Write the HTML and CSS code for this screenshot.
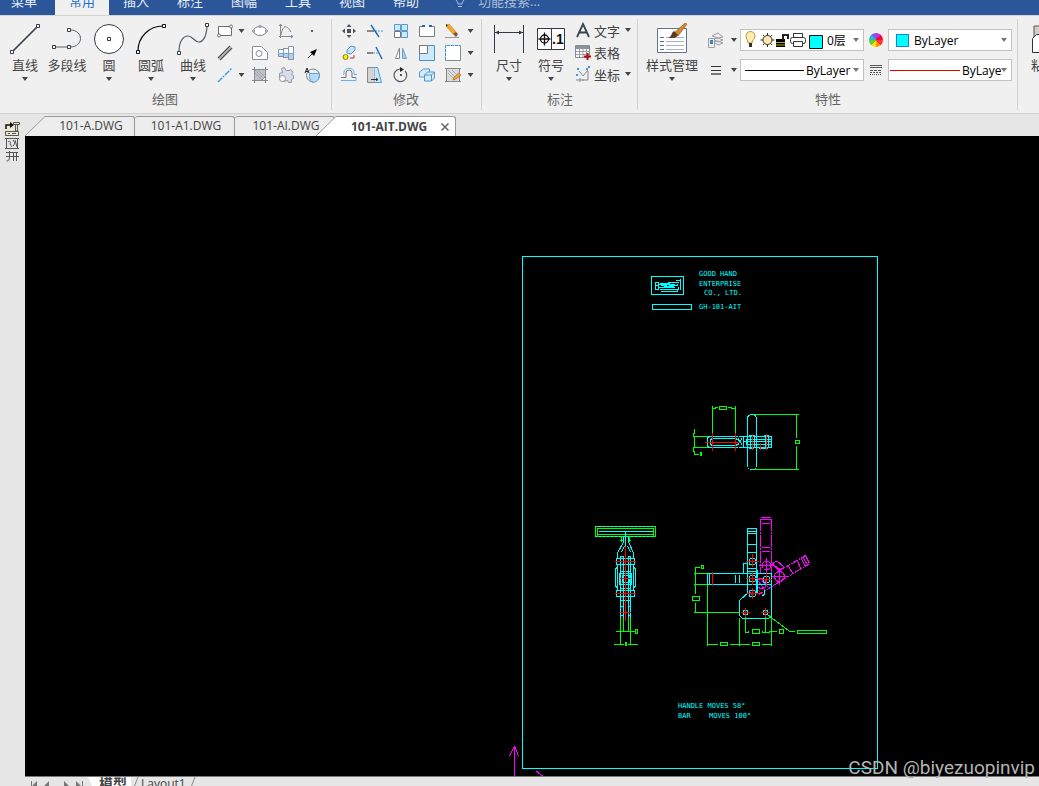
FILE: index.html
```html
<!DOCTYPE html>
<html lang="zh-CN">
<head>
    <meta charset="UTF-8">
    <meta name="viewport" content="width=device-width, initial-scale=1.0">
    <title>101-AIT.DWG</title>
    <link rel="stylesheet" href="styles.css">
</head>
<body>
    <nav class="menu">
        <a class="menu-file" href="#">菜单</a>
        <a class="active" href="#">常用</a>
        <a href="#">插入</a>
        <a href="#">标注</a>
        <a href="#">图幅</a>
        <a href="#">工具</a>
        <a href="#">视图</a>
        <a href="#">帮助</a>
        <label class="search">
            <svg width="12" height="16" viewBox="0 0 12 16" fill="none" stroke="#a9bddc"><path d="M4 11C4 8 1.500 8 1.500 5a4.500 4.500 0 0 1 9 0c0 3-2.500 3-2.500 6zM4 13.500h4"/></svg>
            <input type="text" placeholder="功能搜索..." aria-label="功能搜索">
        </label>
    </nav>

    <header class="ribbon">
        <section class="group group-draw">
            <div class="tools">
                <button class="big">
                    <svg width="32" height="32" viewBox="0 0 32 32" fill="#fff" stroke="#333a42"><path d="M3 29L28 4" stroke-width="1.600"/><path d="M1.500 27.500h3v3h-3zM27.500 1.500h3v3h-3z"/></svg>
                    <span>直线</span><i class="caret"></i>
                </button>
                <button class="big">
                    <svg width="32" height="32" viewBox="0 0 32 32" fill="none" stroke="#333a42"><path d="M3 24h16c14 0 14-17 0-17" stroke="#59616a"/><path d="M1.500 22.500h3v3h-3zM16.500 22.500h3v3h-3zM16.500 5.500h3v3h-3z" fill="#fff"/></svg>
                    <span>多段线</span>
                </button>
                <button class="big">
                    <svg width="32" height="32" viewBox="0 0 32 32" fill="#fff" stroke="#333a42"><circle cx="16" cy="16" r="14.500"/><path d="M14.500 14.500h3v3h-3z"/></svg>
                    <span>圆</span><i class="caret"></i>
                </button>
                <button class="big">
                    <svg width="32" height="32" viewBox="0 0 32 32" fill="none" stroke="#111"><path d="M3 28C3 14 14 3 28 3" stroke-width="1.200"/><path d="M1.500 27.500h3v3h-3zM27.500 1.500h3v3h-3z" fill="#fff"/></svg>
                    <span>圆弧</span><i class="caret"></i>
                </button>
                <button class="big">
                    <svg width="32" height="32" viewBox="0 0 32 32" fill="none" stroke="#333a42"><path d="M2 29C2 17 7 13 11 13c5 0 6 6 11 6 4 0 8-6 8-17" stroke="#59616a" stroke-width="1.200"/><path d="M.500 28.500h3v3h-3zM28.500 .500h3v3h-3z" fill="#fff"/></svg>
                    <span>曲线</span><i class="caret"></i>
                </button>
                <div class="grid grid-draw">
                    <button class="small" aria-label="矩形"><svg width="16" height="16" viewBox="0 0 16 16" fill="#fff" stroke="#666d75"><path d="M1.500 3.500h13v9h-13z"/><circle cx="14" cy="3.500" r="1.500"/><circle cx="2" cy="12.500" r="1.500"/></svg></button>
                    <i class="caret"></i>
                    <button class="small" aria-label="椭圆"><svg width="16" height="16" viewBox="0 0 16 16" fill="#fff" stroke="#777e86"><ellipse cx="8" cy="8" rx="6.500" ry="4.500"/><circle cx="8" cy="3.500" r="1"/><circle cx="1.500" cy="8" r="1"/><circle cx="14.500" cy="8" r="1"/></svg></button>
                    <button class="small" aria-label="公式曲线"><svg width="16" height="16" viewBox="0 0 16 16" fill="none" stroke="#858b92"><path d="M2.500 1v14M1 13.500h14M1 3l1.500-2L4 3M13 12l2 1.500-2 1.500M3 12C5 1 9 2 13 9"/></svg></button>
                    <button class="small" aria-label="点"><svg width="16" height="16" viewBox="0 0 16 16"><path d="M7 7h2v2H7z" fill="#59616a"/></svg></button>

                    <button class="small" aria-label="平行线"><svg width="16" height="16" viewBox="0 0 16 16" stroke="#4a4e55" stroke-width="1.400"><path d="M1 13L13 1M3 15L15 3"/><path d="M2 14L14 2" stroke="#aaa"/></svg></button>
                    <i></i>
                    <button class="small" aria-label="轮廓"><svg width="16" height="16" viewBox="0 0 16 16" fill="#fff" stroke="#8b9097"><path d="M.500 1.500h9l6 6v7H.500z"/><circle cx="7" cy="8.500" r="3"/></svg></button>
                    <button class="small" aria-label="孔轴"><svg width="16" height="16" viewBox="0 0 16 16" fill="#fff" stroke="#8795a6"><path d="M.500 4.500h5v-1h5v-2h5v13h-5v-2h-5v-1h-5z"/><path d="M.500 8.500h15v6h-5v-2h-5v-1h-5z" fill="#b9d0ea"/><path d="M5.500 3v10M10.500 2v12"/><path d="M0 8.500h16" stroke="#5ab2f2"/></svg></button>
                    <button class="small" aria-label="箭头"><svg width="16" height="16" viewBox="0 0 16 16"><path d="M4 13l5-5" stroke="#444"/><path d="M13 4L6 7l4 4z"/></svg></button>

                    <button class="small" aria-label="中心线"><svg width="16" height="16" viewBox="0 0 16 16" stroke="#2ba3df" stroke-width="1.300"><path d="M1 15L15 1" stroke-dasharray="6 1 2 1"/></svg></button>
                    <i class="caret"></i>
                    <button class="small" aria-label="剖面线"><svg width="16" height="16" viewBox="0 0 16 16" fill="#bfc3c8" stroke="#85898f"><path d="M2.500 2.500h11v7l-4 4h-7z"/><path d="M0 2.500h16M0 13.500h16M2.500 0v16M13.500 0v16"/><path d="M3 6l7 7M3 3l9 9M6 3l7 7" stroke="#a4a8ae"/></svg></button>
                    <button class="small" aria-label="图库"><svg width="16" height="16" viewBox="0 0 16 16" fill="#d8dee9" stroke="#9198a2"><path d="M3.500 1.500l3-1 1.500 3h3l2-1 2 3-1.500 2 2 1v3l-2 1v3h-3l-1-2-4 1-4-2v-6l3-1z"/><circle cx="4.500" cy="11.500" r="3" fill="#fff"/></svg></button>
                    <button class="small" aria-label="局部放大"><svg width="16" height="16" viewBox="0 0 16 16" fill="none" stroke="#7a8088"><circle cx="9" cy="8.500" r="6.500"/><path d="M5.500 6.500h10c0 11-10 11-10 3z" fill="#b5dcf7" stroke="#56a3d8"/><path d="M1 6l2-5 2 5M2 4.500h2" stroke="#222"/></svg></button>
                </div>
            </div>
            <h2>绘图</h2>
        </section>

        <section class="group group-modify">
            <div class="tools">
                <div class="grid grid-modify">
                    <button class="small" aria-label="平移"><svg width="16" height="16" viewBox="0 0 16 16" fill="#4d535c"><path d="M6 6h4v4H6z"/><path d="M8 1l2.500 3h-5zM8 15l2.500-3h-5zM1 8l3-2.500v5zM15 8l-3-2.500v5z"/></svg></button>
                    <button class="small" aria-label="裁剪"><svg width="16" height="16" viewBox="0 0 16 16" fill="none"><path d="M0 8h7" stroke="#888" stroke-width="2"/><path d="M8 8h8" stroke="#4f95df" stroke-dasharray="2 1"/><path d="M4 2l8 12" stroke="#1c69c2" stroke-width="1.400"/></svg></button>
                    <button class="small" aria-label="阵列"><svg width="16" height="16" viewBox="0 0 16 16" fill="#cdeafd" stroke="#5a9ccb"><path d="M1.500 1.500h6v6h-6zM8.500 1.500h6v6h-6zM8.500 8.500h6v6h-6z"/><path d="M1.500 8.500h6v6h-6z" fill="#fff" stroke="#777"/></svg></button>
                    <button class="small" aria-label="打断"><svg width="16" height="16" viewBox="0 0 16 16" fill="#fff" stroke="#777d84"><path d="M4 3.500H.500v10h15v-10H12"/><path d="M3 3h3M10 3h3" stroke="#1c69c2" stroke-width="2"/></svg></button>
                    <button class="small" aria-label="删除"><svg width="16" height="16" viewBox="0 0 16 16"><path d="M1 3l3-2 7 8-3 2z" fill="#f5a623" stroke="#c9790a" stroke-width=".6"/><path d="M8 11l3-2 2 2-2 3z" fill="#8b4a38"/><path d="M0 14.500h14" stroke="#999"/><path d="M1 1v3l2-2z" fill="#333"/></svg></button>
                    <i class="caret"></i>

                    <button class="small" aria-label="平移复制"><svg width="16" height="16" viewBox="0 0 16 16"><path d="M6 5l4-4 4 1v3l-4 4-4-1z" fill="#c7e4fa" stroke="#5496d2"/><circle cx="4.500" cy="12" r="2.500" fill="#fff200" stroke="#888016"/><path d="M9 13h4v-3" fill="none" stroke="#bc3434"/></svg></button>
                    <button class="small" aria-label="延伸"><svg width="16" height="16" viewBox="0 0 16 16" fill="none"><path d="M0 8h6" stroke="#888" stroke-width="2"/><path d="M6 8h6" stroke="#4f95df" stroke-dasharray="2 1"/><path d="M9 2l6 12" stroke="#1c69c2" stroke-width="1.400"/></svg></button>
                    <button class="small" aria-label="镜像"><svg width="16" height="16" viewBox="0 0 16 16"><path d="M6.500 3v10.500h-4z" fill="#fff" stroke="#85898e"/><path d="M9.500 3v10.500h4z" fill="#9fd3f5" stroke="#6ba3c9"/></svg></button>
                    <button class="small" aria-label="缩放"><svg width="16" height="16" viewBox="0 0 16 16"><path d="M.500 .500h15v15H.500z" fill="#cdeafd" stroke="#4591c8"/><path d="M.500 .500h8v8h-8z" fill="#fff" stroke="#777"/></svg></button>
                    <button class="small" aria-label="拉伸"><svg width="16" height="16" viewBox="0 0 16 16" fill="#fff"><path d="M.500 .500h15v15H.500z" stroke="#858b92"/><path d="M.500 15V.500H15" stroke="#3d96d8" stroke-dasharray="3 1"/></svg></button>
                    <i class="caret"></i>

                    <button class="small" aria-label="等距线"><svg width="16" height="16" viewBox="0 0 16 16" fill="none"><path d="M0 10.500h5V6a3 3 0 0 1 6 0v4.500h4" stroke="#777"/><path d="M0 13.500h15V10.500M2 7.500h1V5c0-5 10-5 10 0v2.500h3" stroke="#63b1e8"/></svg></button>
                    <button class="small" aria-label="拉伸到"><svg width="16" height="16" viewBox="0 0 16 16"><path d="M.500 .500h7v15h-7z" fill="#d4d4d4" stroke="#888"/><path d="M7.500 .500h3l4 15h-7" fill="#c7e7fc" stroke="#4c9bd2"/><path d="M4 12.500h7M9 11l2 1.500L9 14" fill="none" stroke="#333"/></svg></button>
                    <button class="small" aria-label="旋转"><svg width="16" height="16" viewBox="0 0 16 16" fill="none" stroke="#555b62" stroke-width="1.200"><path d="M7 2a6.300 6.300 0 1 0 5 2"/><path d="M7 0l4 2.500L7 5z" fill="#222" stroke="none"/><circle cx="8" cy="8" r="1" fill="#222" stroke="none"/></svg></button>
                    <button class="small" aria-label="复制"><svg width="16" height="16" viewBox="0 0 16 16" fill="#d5ebfb" stroke="#4f98cf"><path d="M.500 5l4-3h6v5l-4 3h-6z"/><path d="M5.500 8l3-3h7v6l-3 3h-7zM5.500 8h7v6M12.500 8l3-3"/></svg></button>
                    <button class="small" aria-label="编辑剖面线"><svg width="16" height="16" viewBox="0 0 16 16"><path d="M1.500 1.500h13v13h-13z" fill="#d9dadc" stroke="#858585"/><path d="M3 6l7 7M3 3l9 9M7 3l6 6" stroke="#acafb3"/><path d="M0 1.500h16M0 14.500h16" stroke="#85898d"/><path d="M14 6l2 2-5 4-3 1 1-3z" fill="#efa53a" stroke="#a86012" stroke-width=".6"/></svg></button>
                    <i class="caret"></i>
                </div>
            </div>
            <h2>修改</h2>
        </section>

        <section class="group group-dim">
            <div class="tools">
                <button class="big">
                    <svg width="32" height="32" viewBox="0 0 32 32" stroke="#333a42" fill="#333a42"><path d="M1.500 2v28M30.500 2v28M2 9.500h28" /><path d="M2 9.500l4-2v4zM30 9.500l-4-2v4z" stroke="none"/></svg>
                    <span>尺寸</span><i class="caret"></i>
                </button>
                <button class="big">
                    <svg width="32" height="32" viewBox="0 0 32 32" fill="#fff" stroke="#111"><path d="M2.500 5.500h27v21h-27zM16.500 5v22" stroke="#333a42"/><circle cx="9.500" cy="16" r="4" stroke-width="1.300"/><path d="M9.500 9.500v13M3.500 16h12" stroke-width="1.300"/><text x="17" y="21" class="icon-text">.1</text></svg>
                    <span>符号</span><i class="caret"></i>
                </button>
                <div class="list">
                    <button class="row"><svg width="16" height="16" viewBox="0 0 16 16" fill="none" stroke="#3c444d" stroke-width="1.800"><path d="M2 15L8 2l6 13M4 10.500h8"/></svg>文字<i class="caret"></i></button>
                    <button class="row"><svg width="16" height="16" viewBox="0 0 16 16"><path d="M.500 1.500h14v12H.500z" fill="#fff" stroke="#858b90"/><path d="M1 2h13v3H1z" fill="#8b949c"/><path d="M1 7.500h13M1 10.500h13M4.500 4v9M8 4v9M11.500 4v9" stroke="#9b9fa3"/><path d="M12.500 9v7M9 12.500h7" stroke="#b40d0d" stroke-width="2"/></svg>表格</button>
                    <button class="row"><svg width="16" height="16" viewBox="0 0 16 16" fill="none"><path d="M4 5l4 5 5-6M1 14h8M5 12v4M13 5v9h-6" stroke="#858a90"/><path d="M2 3h3M11 3h3M2 8v3M14 0v3" stroke="#4294df" stroke-width="2" stroke-dasharray="2 1"/></svg>坐标<i class="caret"></i></button>
                </div>
            </div>
            <h2>标注</h2>
        </section>

        <section class="group group-props">
            <div class="tools">
                <button class="big big-wide">
                    <svg width="32" height="32" viewBox="0 0 32 32"><path d="M1.500 5.500h29v24h-29z" fill="#fff" stroke="#60758c"/><path d="M4 14.500h4M4 18.500h4M4 22.500h4M4 26.500h4" stroke="#4c7196"/><path d="M10 14.500h18M10 18.500h18M10 22.500h18M10 26.500h18" stroke="#a5b5c6"/><path d="M29 0l2 1-9 12-4-3z" fill="#d8872b" stroke="#84521d" stroke-width=".6"/><path d="M18 8l4 4c-2 4-6 3-10 3 4-1 3-5 6-7z" fill="#5c3a20"/></svg>
                    <span>样式管理</span><i class="caret"></i>
                </button>
                <div class="props">
                    <button class="small" aria-label="图层"><svg width="16" height="16" viewBox="0 0 16 16" fill="#eee" stroke="#9ba1a8"><path d="M4 4l6-3 5 4-5 1zM5 7l5-1 5 2-5 2zM6 10l4-1 5 2-5 2z"/><path d="M.500 6.500h6v9h-6z"/><path d="M2 8h3v4H2z" fill="#4581b8" stroke="none"/></svg></button>
                    <i class="caret"></i>
                    <div class="combo">
                        <svg width="80" height="18" viewBox="0 0 80 18">
                            <path d="M3 12C3 9 1 8 1 5a4 4 0 0 1 9 0c0 3-3 4-3 7z" fill="#ffedb0" stroke="#b39443"/><path d="M4 12h3v4H4z" fill="#333"/>
                            <g stroke="#333" fill="#ffe9ad"><path d="M22.500 2v14M15.500 9h14M18 4l9 10M27 4l-9 10"/><circle cx="22.500" cy="9" r="4.500"/></g>
                            <path d="M31 8h9v8h-9z"/><path d="M31 11.500h9M31 14h9" stroke="#b5a900"/><path d="M38 9V4h5v4" fill="none" stroke="#222" stroke-width="2"/>
                            <g fill="#fff" stroke="#333"><path d="M48.500 2.500h9v5h-9z"/><rect x="45.500" y="6.500" width="15" height="6" rx="2"/><path d="M48.500 10.500h9v5h-9z"/></g>
                            <path d="M64.500 4.500h13v13h-13z" fill="#0ff" stroke="#111"/>
                        </svg>
                        <select aria-label="图层"><option>0层</option></select>
                        <i class="caret caret-grey"></i>
                    </div>
                    <span class="color-wheel"></span>
                    <div class="combo">
                        <i class="swatch"></i>
                        <select aria-label="颜色"><option>ByLayer</option></select>
                        <i class="caret caret-grey"></i>
                    </div>

                    <button class="small" aria-label="线宽"><svg width="16" height="16" viewBox="0 0 16 16" stroke="#333"><path d="M3 4.500h10M3 8.500h10"/><path d="M3 12h10" stroke-width="2" stroke="#777"/></svg></button>
                    <i class="caret"></i>
                    <div class="combo">
                        <i class="line-black"></i>
                        <select aria-label="线宽"><option>ByLayer</option></select>
                        <i class="caret caret-grey"></i>
                    </div>
                    <svg width="14" height="14" viewBox="0 0 14 14" stroke="#555"><path d="M1 2.500h12M1 4.500h12"/><path d="M1 7.500h12" stroke-dasharray="3 1"/><path d="M1 9.500h12" stroke-dasharray="2 1"/><path d="M1 11.500h12" stroke-dasharray="1 1"/></svg>
                    <div class="combo">
                        <i class="line-red"></i>
                        <select aria-label="线型"><option>ByLayer</option></select>
                        <i class="caret caret-grey"></i>
                    </div>
                </div>
            </div>
            <h2>特性</h2>
        </section>

        <section class="group group-clip">
            <div class="tools">
                <button class="big big-paste">
                    <svg width="32" height="32" viewBox="0 0 32 32"><path d="M3 3h24v14H3z" fill="#d6cec5" stroke="#555"/><path d="M1.500 15.500l4-4h18v18h-22z" fill="#fff" stroke="#333"/></svg>
                    <span>粘贴</span>
                </button>
            </div>
        </section>
    </header>

    <main class="workspace">
        <aside class="side">
            <svg width="16" height="44" viewBox="0 0 16 44" fill="none" stroke="#555">
                <path d="M0 0h14v14H0z" fill="#e9e7d2" stroke="none"/>
                <path d="M1 8V4h5" stroke="#111" stroke-width="1.500"/><path d="M5 1l4 3-4 3z" fill="#111" stroke="none"/><path d="M8.500 1.500h6v2h-6zM10.500 4v6h2v-6"/>
                <path d="M.500 10.500h13v4H.500zM3 12.500h2M7 12.500h4"/>
                <path d="M1.500 17.500h11v10h-11zM3 21c2-2 3 0 2 2l2 3M8 19l2 3-2 3M10 19l2 7M0 17.500h14M0 27.500h14"/>
                <path d="M1 31.500h12M1 35.500h13M4.500 30v6c0 3-1 4-3 4M8.500 32v8M11.500 31v9"/>
            </svg>
        </aside>
        <div class="documents">
            <nav class="doc-tabs">
                <svg class="slant" width="20" height="20" viewBox="0 0 20 20"><path d="M0 20L20 0v20z" fill="#ededed"/><path d="M0 20L20 .500" stroke="#999"/></svg>
                <a class="doc-tab doc-first" href="#">101-A.DWG</a>
                <a class="doc-tab" href="#">101-A1.DWG</a>
                <a class="doc-tab" href="#">101-AI.DWG</a>
                <svg class="slant slant-active" width="20" height="20" viewBox="0 0 20 20"><path d="M0 20L20 0v20z" fill="#fff"/><path d="M0 20L20 .500" stroke="#999"/></svg>
                <div class="doc-tab doc-active"><a href="#">101-AIT.DWG</a><button class="close" aria-label="关闭"><svg width="8" height="8" viewBox="0 0 8 8" stroke="#666" stroke-width="1.500"><path d="M.500 .500l7 7M7.500 .500l-7 7"/></svg></button></div>
            </nav>

            <svg class="drawing" viewBox="25 136 1014 640">
                <!-- sheet border and title -->
                <g class="cyan">
                    <path d="M522.500 256.500h355v512h-355z"/>
                    <path d="M651.500 276.500h32v18h-32zM652.500 304.500h39v5h-39z"/>
                    <path d="M655.500 282.500h3v7h-3zM658 284.500h17M658 287.500h17M660 289.500h18v-3M661 291.500h16v-2M660 283.500h10M661 285.500h6M669 285.500h8v-2M668 282.500h11M676 280.500h4v8M680.500 279v11M655 285.500h4M664 286.500h10"/>
                </g>
                <g class="cad-text">
                    <text x="699" y="276">GOOD HAND</text>
                    <text x="699" y="286">ENTERPRISE</text>
                    <text x="704" y="295">CO., LTD.</text>
                    <text x="699" y="309">GH-101-AIT</text>
                    <text x="678" y="708">HANDLE MOVES 58°</text>
                    <text x="678" y="718">BAR</text>
                    <text x="709" y="718">MOVES 100°</text>
                </g>

                <!-- top view -->
                <g class="green">
                    <path d="M712.500 406v27M735.500 406v27M713 408.500h2v-1h3M728 407.500h3v1h4M719.500 406.500h7v3h-7z"/>
                    <path d="M694.500 429v4h-1v4M694 436.500h16M694 447.500h18M694.500 437v10M693.500 447v4h1v3h4M700.500 452.500h1v3h-1z"/>
                    <path d="M754 414.500h45M754 469.500h45M796.500 415v23M796.500 446v23M795.500 440.500h4v3h-4z"/>
                </g>
                <g class="cyan">
                    <path d="M709 436.500h29M709 447.500h29M709 436.500l-2 2v7l2 2M712 438.500h24l4 3M712 445.500h24l4-3M712 438.500l-2 2v3l2 2"/>
                    <path d="M738.500 436.500h33v11h-33M746 439.500h25M746 444.500h25M743 441.500h28M743.500 437v10M746.500 439v6M750.500 436v12M754.500 436v12M765.500 436v12M768.500 436v12M738 438l4 7M742 438l-4 7M749 435.500h6M764 435.500h5M749 448.500h5M759 448.500h9"/>
                    <rect x="747.500" y="414.500" width="9" height="55" rx="4"/>
                </g>
                <path class="red" d="M705 442.500h35M712.500 433v18M735.500 433v18M752.500 434v16M760.500 443v7M766.500 434v16"/>

                <!-- front view -->
                <g class="green">
                    <path d="M595.500 526.500h60v10h-60z"/>
                    <path d="M597 528.500h57M597 534.500h57M597.500 528v8M653.500 528v8"/>
                    <path d="M621.500 537v5M629.500 537v5M620 540.500h4M628 540.500h3"/>
                    <path d="M620.500 618v27M623.500 618v14M628.500 618v14M630.500 618v27M616 631.500h20M635.500 629.500h2v4h-2zM614 644.500h10M628 644.500h10M625.500 642.500h1v3h-1z"/>
                </g>
                <g class="cyan">
                    <path d="M599 531.500h54M625.500 532v15M623.500 536v6l-6 11v5M628.500 536v6l5 11v5M621.500 552l3-6M630.500 552l-3-6"/>
                    <path d="M595 526.500h60M595 536.500h60" stroke-dasharray="2 2"/>
                    <path d="M616.500 558.500h18v6h-18zM616.500 590.500h18v6h-18zM617.500 564v3l-2 2v17l2 2v3M633.500 564v3l2 2v17l-2 2v3M617.500 567v21M633.500 567v21"/>
                    <path d="M620.500 556v62M623.500 556v62M628.500 556v62M630.500 556v62M620 556.500h4M628 556.500h3M619.500 573.500h12v11h-12zM622 575.500h7v7h-7zM620 571.500h11M620 588.500h11M620 600.500h11M620 606.500h4M628 606.500h3M620 615.500h4M628 615.500h3"/>
                </g>
                <path class="red" d="M625.500 546v75M615 561.500h21M615 593.500h21M620 578.500h11M619 612.500h12"/>

                <!-- side view, moved position -->
                <g class="magenta">
                    <path d="M760.500 519v55M771.500 519v55" stroke-dasharray="12 1 2 1"/>
                    <path d="M761 517.500h10M760 519.500h12M762 523.500h8M762 547.500h8M762 551.500h8"/>
                    <path d="M805.500 555.500l4 8M803 557l5 9M801 558l4 8M797 560l4 9M788 565l5 9"/>
                    <path d="M805.500 555.500L774 574M809.500 563.500L758 595" stroke-dasharray="5 1 2 1"/>
                    <circle cx="766.500" cy="565.500" r="4.500"/><circle cx="779.500" cy="576.500" r="5"/><circle cx="761.500" cy="583.500" r="5"/>
                    <path d="M759 565.500h14M766.500 558v15M771 576.500h17M779.500 568v17M772 564l5-3 7 6-5 4zM758 581l7 9M760 578l8 9M749 590l4 7M773 564l10 9"/>
                </g>

                <!-- side view -->
                <g class="cyan">
                    <path d="M747.500 528.500h9v65h-9zM747 531.500h9M747 533.500h9M747 544.500h9M747 552.500h9M747 568.500h9M747 571.500h9"/>
                    <path d="M707.500 573.500h64v11h-64zM709.500 574v10M735.500 575v8M739.500 575v8M743.500 573v-9.500h4"/>
                    <path d="M771.500 573v43l-3 2.500h-26l-3-3v-15l9-8M757.500 570v24M762 596l3-2-1-4"/>
                    <circle cx="752.500" cy="561.500" r="3.500"/><circle cx="752.500" cy="578.500" r="3.500"/><circle cx="766.500" cy="579.500" r="3.500"/><circle cx="752.500" cy="593.500" r="3.500"/>
                    <circle cx="745.500" cy="612.500" r="2.500"/><circle cx="765.500" cy="612.500" r="2.500"/>
                </g>
                <g class="green">
                    <path d="M694 573.500h13M694 584.500h13M694 612.500h46M695.500 594v-26.500h4M695.500 603v9M701.500 565.500h2v3h-2zM692.500 596.500h7v4h-7z"/>
                    <path d="M707.500 585v61M739.500 618v28M771.500 618v28M745.500 616v16h3v-1M765.500 616v16h-3v-1h-1M766 632.500h3v-1h8M752.500 629.500h7v4h-7zM779.500 629.500h4v4h-4z"/>
                    <path d="M708 644.500h10M720.500 642.500h7v3h-7zM730 644.500h20M752.500 642.500h7v3h-7zM762 644.500h9M768 615l22 16.500h5M797.500 630.500h29v3h-29z"/>
                </g>
                <path class="red" d="M712.500 572v14M746 561.500h13M752.500 554v13M746 578.500h13M752.500 572v13M761 579.500h11M766.500 573v13M746 593.500h13M752.500 588v11M741 612.500h9M745.500 608v9M761 612.500h9M765.500 608v9M758 590l5 5"/>

                <!-- UCS axis -->
                <path class="magenta" d="M514.500 776v-30M514.500 746l-5 10M514.500 746l4 10M536 771l8 6"/>
            </svg>

            <nav class="layout-tabs">
                <svg class="pager" width="58" height="12" viewBox="0 0 58 12" fill="#777"><path d="M1 1h1v10H1zM7 1v10L2 6zM19 1v10l-5-5zM34 1v10l5-5zM46 1v10l5-5zM52 1h1v10h-1z"/></svg>
                <a class="layout-tab layout-active" href="#">模型</a>
                <svg class="divider" width="8" height="18" viewBox="0 0 8 18"><path d="M7 0L0 18" stroke="#888"/></svg>
                <a class="layout-tab" href="#">Layout1</a>
                <svg class="divider" width="8" height="18" viewBox="0 0 8 18"><path d="M7 0L0 18" stroke="#888"/></svg>
            </nav>
        </div>
        <span class="watermark">CSDN @biyezuopinvip</span>
    </main>
</body>
</html>
```
FILE: styles.css
```css
* {
    box-sizing: border-box;
}
body {
    margin: 0;
    height: 100vh;
    display: flex;
    flex-direction: column;
    overflow: hidden;
    background-color: #e6e6e6;
    color: #444;
    font-family: "Open Sans", "Noto Sans CJK SC", sans-serif;
    font-size: 13px;
}
a {
    color: inherit;
    text-decoration: none;
}
button {
    border: none;
    background: none;
    padding: 0;
    font: inherit;
    color: inherit;
    cursor: pointer;
}
svg {
    display: block;
    flex: none;
}

/* menu bar */
.menu {
    display: flex;
    align-items: flex-end;
    height: 15px;
    flex: none;
    overflow: hidden;
    background-color: #2b579a;
    color: #e8eef7;
}
.menu a {
    width: 54px;
    height: 28px;
    line-height: 28px;
    text-align: center;
}
.menu .menu-file {
    width: 55px;
    padding-right: 7px;
}
.menu .active {
    background-color: #f0f0f0;
    color: #1f6fd0;
}
.search {
    display: flex;
    align-items: center;
    gap: 12px;
    height: 28px;
    margin-left: 21px;
}
.search input {
    width: 120px;
    padding: 0;
    border: none;
    background: none;
    color: #a9bddc;
    font: inherit;
}
.search input::placeholder {
    color: #a9bddc;
}

/* ribbon */
.ribbon {
    display: flex;
    flex: none;
    height: 99px;
    padding: 3px 0;
    background-color: #f0f0f0;
    border-top: 1px solid #d4d4d4;
    border-bottom: 1px solid #d0d0d0;
    overflow: hidden;
}
.group {
    flex: none;
    border-right: 1px solid #d2d2d2;
}
.group h2 {
    margin: 0;
    padding-right: 5px;
    font-size: 13px;
    line-height: 18px;
    font-weight: normal;
    text-align: center;
    color: #666;
}
.group-draw {
    width: 332px;
    padding-left: 4px;
}
.group-modify {
    width: 150px;
    padding-left: 4px;
}
.group-dim {
    width: 156px;
    padding-left: 6px;
}
.group-props {
    width: 380px;
    padding-left: 6px;
}
.group-clip {
    border-right: none;
    padding-left: 13px;
}
.tools {
    display: flex;
    height: 71px;
}
.big {
    width: 42px;
    flex: none;
    display: flex;
    flex-direction: column;
    align-items: center;
    padding-top: 4px;
    white-space: nowrap;
}
.big span {
    line-height: 20px;
    margin-bottom: 2px;
}
.big-wide {
    width: 56px;
}
.big-paste {
    align-items: flex-start;
}
.caret {
    flex: none;
    width: 6px;
    height: 4px;
    background-color: #444;
    clip-path: polygon(0 0, 100% 0, 50% 100%);
}
.caret-grey {
    background-color: #777;
}
.grid {
    display: grid;
    grid-auto-rows: 22px;
    align-items: center;
    justify-items: center;
    padding-top: 1px;
}
.grid-draw {
    grid-template-columns: 22px 11px 26px 26px 26px;
}
.grid-modify {
    grid-template-columns: repeat(5, 26px) 9px;
}
.icon-text {
    font: bold 14px "Liberation Sans", sans-serif;
    fill: #111;
    stroke: none;
}
.list {
    padding-left: 3px;
}
.row {
    display: flex;
    align-items: center;
    height: 22px;
    gap: 3px;
}
.row .caret {
    margin-left: 2px;
}
.props {
    display: grid;
    grid-template-columns: 24px 4px 124px 16px 124px;
    column-gap: 4px;
    grid-auto-rows: 22px;
    row-gap: 8px;
    align-items: center;
    justify-items: center;
    padding: 10px 0 0 4px;
}
.combo {
    display: flex;
    align-items: center;
    width: 100%;
    height: 22px;
    padding: 0 4px;
    background-color: #fff;
    border: 1px solid #c2c2c2;
    overflow: hidden;
}
.combo select {
    appearance: none;
    flex: 1;
    min-width: 0;
    margin: 0;
    padding: 0 0 0 2px;
    border: none;
    background: none;
    color: #000;
    font: 12px "Open Sans", "Noto Sans CJK SC", sans-serif;
}
.swatch {
    width: 13px;
    height: 13px;
    margin: 0 3px;
    background-color: #0ff;
    border: 1px solid #1f7fd4;
}
.line-black {
    flex: none;
    width: 59px;
    border-top: 1px solid #000;
}
.line-red {
    flex: none;
    width: 70px;
    margin-left: -3px;
    border-top: 1px solid #e00000;
}
.color-wheel {
    width: 14px;
    height: 14px;
    border-radius: 50%;
    background: conic-gradient(#c12be0 0 12%, #f03 12% 25%, #f33 25% 38%, #ff9000 38% 50%, #ffe000 50% 62%, #5bd03c 62% 75%, #2bb6c8 75% 88%, #7a5cf0 88%);
}

/* workspace */
.workspace {
    position: relative;
    display: flex;
    flex: 1;
    min-height: 0;
}
.side {
    width: 25px;
    flex: none;
    padding: 7px 0 0 5px;
}
.documents {
    flex: 1;
    min-width: 0;
    display: flex;
    flex-direction: column;
}
.doc-tabs {
    display: flex;
    align-items: flex-end;
    flex: none;
    height: 22px;
    font-size: 12px;
}
.doc-tab {
    height: 20px;
    line-height: 18px;
    width: 100px;
    padding-left: 3px;
    text-align: center;
    background-color: #ededed;
    border: 1px solid #999;
    border-width: 1px 1px 0 0;
    border-radius: 3px 3px 0 0;
}
.doc-first {
    width: 90px;
    border-top-left-radius: 0;
}
.slant-active {
    z-index: 1;
    margin-left: -19px;
}
.doc-active {
    z-index: 1;
    width: 120px;
    display: flex;
    align-items: center;
    justify-content: space-between;
    padding: 0 6px 0 15px;
    border-top-left-radius: 0;
    background-color: #fff;
    font-weight: bold;
}
.drawing {
    flex: 1;
    min-height: 0;
    width: 100%;
    background-color: #000;
    fill: none;
    shape-rendering: crispEdges;
}
.cyan {
    stroke: #0ff;
}
.green {
    stroke: #0f0;
}
.red {
    stroke: #f00;
}
.magenta {
    stroke: #f0f;
}
.cad-text {
    fill: #0ff;
    font: 7px "DejaVu Sans Mono", monospace;
}
.layout-tabs {
    display: flex;
    flex: none;
    height: 10px;
    overflow: hidden;
    border-top: 1px solid #777;
}
.pager {
    margin: 3px 0 0 5px;
}
.layout-tab {
    height: 18px;
    line-height: 14px;
    padding: 0 2px;
    font-size: 12px;
}
.layout-active {
    padding: 0 4px 0 11px;
    font-size: 14px;
    font-weight: bold;
    background-color: #fff;
    clip-path: polygon(0 0, 100% 0, 100% 100%, 8px 100%);
}
.watermark {
    position: absolute;
    right: 4px;
    bottom: 6px;
    line-height: 24px;
    font-family: Roboto, sans-serif;
    font-size: 19px;
    color: #b4b4b4;
}
```
